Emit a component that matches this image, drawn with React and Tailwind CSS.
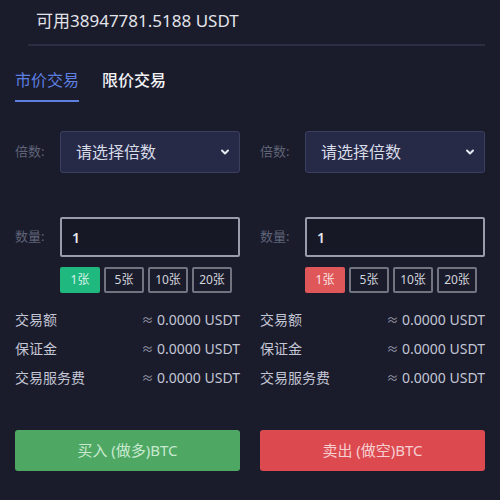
import React from 'react';

const font = { fontFamily: '"Noto Sans", "Noto Sans CJK SC", sans-serif' };

const Column = ({ accent, action }) => {
  const chips = ['1张', '5张', '10张', '20张'];
  const rows = ['交易额', '保证金', '交易服务费'];

  return (
    <div className="flex flex-col w-[225px]">
      {/* Leverage select */}
      <div className="flex items-center h-[42px]">
        <span className="w-[45px] text-[13px] text-[#5f6478]">倍数:</span>
        <div className="flex items-center justify-between w-[180px] h-[42px] rounded-[3px] border border-[#3b4060] bg-[#262a47] pl-[15px] pr-[8px]">
          <span className="text-[16px] text-[#d8dbe8]">请选择倍数</span>
          <svg width="12" height="12" viewBox="0 0 24 24" fill="none" stroke="#e6e8f0" strokeWidth="4" strokeLinecap="round" strokeLinejoin="round">
            <path d="M6 9l6 6 6-6" />
          </svg>
        </div>
      </div>

      {/* Quantity */}
      <div className="flex items-center h-[40px] mt-[44px]">
        <span className="w-[45px] text-[13px] text-[#5f6478]">数量:</span>
        <div className="flex items-center w-[180px] h-[40px] rounded-[2px] border-2 border-[#9a9cab] bg-[#171826] pl-[10px]">
          <span className="text-[14px] font-semibold text-[#e8e9ee]">1</span>
        </div>
      </div>

      <div className="flex gap-[4px] ml-[45px] mt-[10px]">
        {chips.map((c, i) => (
          <div
            key={c}
            className={`flex items-center justify-center w-[40px] h-[26px] text-[12px] rounded-[2px] ${
              i === 0
                ? accent === 'green'
                  ? 'bg-[#1fb87f] text-[#d9f5ea]'
                  : 'bg-[#e0575a] text-[#fbe3e3]'
                : 'border-2 border-[#72747f] text-[#d2d4dc]'
            }`}
          >
            {c}
          </div>
        ))}
      </div>

      {/* Totals */}
      <div className="flex flex-col mt-[12px]">
        {rows.map((r) => (
          <div key={r} className="flex items-center justify-between h-[29px] text-[14px] text-[#c3c6d4]">
            <span>{r}</span>
            <span>
              <span className="text-[12px] text-[#9a9db0]">≈</span> 0.0000 USDT
            </span>
          </div>
        ))}
      </div>

      <button
        className={`mt-[38px] h-[41px] w-full rounded-[3px] text-[15px] ${
          accent === 'green' ? 'bg-[#4ea864] text-[#c8e8cf]' : 'bg-[#dc4a50] text-[#f6cfd1]'
        }`}
      >
        {action}
      </button>
    </div>
  );
};

export default function App() {
  return (
    <div className="w-[500px] h-[500px] bg-[#1a1b2b] overflow-hidden" style={font}>
      {/* Balance */}
      <div className="pl-[36px] pt-[8px] h-[44px] text-[17px] text-[#e3e4ea]">可用38947781.5188 USDT</div>
      <div className="ml-[28px] mr-[15px] h-[2px] bg-[#2b2d42]" />

      {/* Tabs */}
      <div className="flex gap-[23px] px-[15px] mt-[23px]">
        <div className="flex flex-col">
          <span className="text-[16px] text-[#5d7fe0] leading-[22px]">市价交易</span>
          <div className="h-[2px] mt-[9px] bg-[#5d7fe0]" />
        </div>
        <span className="text-[16px] text-[#f2f2f5] font-medium leading-[22px]">限价交易</span>
      </div>

      {/* Order columns */}
      <div className="flex gap-[20px] px-[15px] mt-[29px]">
        <Column accent="green" action="买入 (做多)BTC" />
        <Column accent="red" action="卖出 (做空)BTC" />
      </div>
    </div>
  );
}
